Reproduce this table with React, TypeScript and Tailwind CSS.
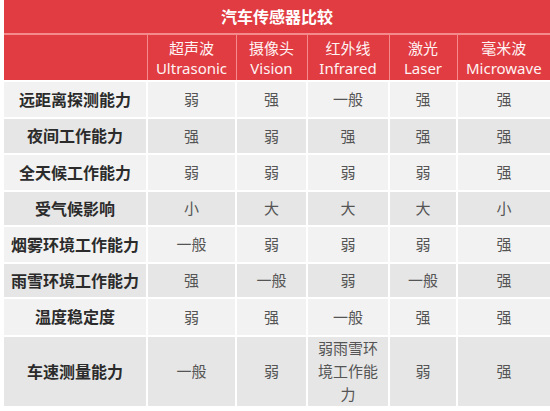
const cols = [
  { zh: '超声波', en: 'Ultrasonic' },
  { zh: '摄像头', en: 'Vision' },
  { zh: '红外线', en: 'Infrared' },
  { zh: '激光', en: 'Laser' },
  { zh: '毫米波', en: 'Microwave' },
]

const rows = [
  { name: '远距离探测能力', h: 'h-[37px]', v: ['弱', '强', '一般', '强', '强'] },
  { name: '夜间工作能力', h: 'h-[36px]', v: ['强', '弱', '强', '强', '强'] },
  { name: '全天候工作能力', h: 'h-[37px]', v: ['弱', '弱', '弱', '弱', '强'] },
  { name: '受气候影响', h: 'h-[35px]', v: ['小', '大', '大', '大', '小'] },
  { name: '烟雾环境工作能力', h: 'h-[37px]', v: ['一般', '弱', '弱', '弱', '强'] },
  { name: '雨雪环境工作能力', h: 'h-[35px]', v: ['强', '一般', '弱', '一般', '强'] },
  { name: '温度稳定度', h: 'h-[38px]', v: ['弱', '强', '一般', '强', '强'] },
  { name: '车速测量能力', h: 'h-[67px]', v: ['一般', '弱', '弱雨雪环境工作能力', '弱', '强'] },
]

export default function App() {
  return (
    <div
      className="w-[550px] h-[411px] bg-white overflow-hidden pl-[4px]"
      style={{ fontFamily: '"Noto Sans", "Noto Sans CJK SC", sans-serif' }}
    >
      <table className="w-[546px] table-fixed border-collapse text-center">
        <colgroup>
          <col className="w-[143px]" />
          <col className="w-[89px]" />
          <col className="w-[71px]" />
          <col className="w-[82px]" />
          <col className="w-[68px]" />
          <col className="w-[93px]" />
        </colgroup>
        <thead>
          <tr className="h-[34px] bg-[#e03c42]">
            <th colSpan={6} className="border-b-2 border-[#f58a8c] text-[16px] font-bold text-white">
              汽车传感器比较
            </th>
          </tr>
          <tr className="h-[47px] bg-[#e03c42]">
            <th className="border-r border-[#f58a8c]"></th>
            {cols.map((c, i) => (
              <th
                key={c.en}
                className={`${i < cols.length - 1 ? 'border-r border-[#f58a8c]' : ''} whitespace-nowrap text-[15px] font-normal leading-[20px] text-[#fff3f3]`}
              >
                <div>{c.zh}</div>
                <div>{c.en}</div>
              </th>
            ))}
          </tr>
        </thead>
        <tbody>
          {rows.map((r, ri) => (
            <tr key={r.name} className={`${r.h} ${ri % 2 === 0 && ri !== rows.length - 1 ? 'bg-[#f2f2f2]' : 'bg-[#e6e6e6]'}`}>
              <td className="border-2 border-white border-l-0 whitespace-nowrap text-[16px] font-bold text-[#2b2b2b]">{r.name}</td>
              {r.v.map((v, i) => (
                <td
                  key={i}
                  className={`border-2 border-white ${i === r.v.length - 1 ? 'border-r-0' : ''} px-[5px] text-[15px] leading-[23px] text-[#555555]`}
                >
                  {v}
                </td>
              ))}
            </tr>
          ))}
        </tbody>
      </table>
    </div>
  )
}
